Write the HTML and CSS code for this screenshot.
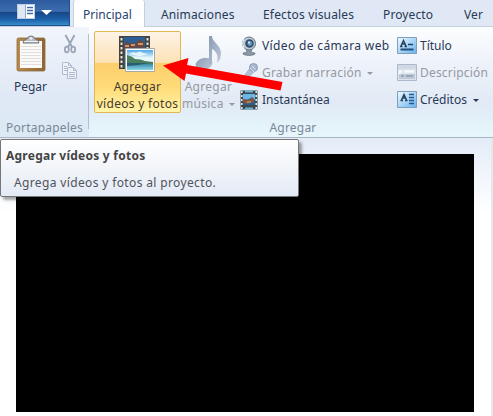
FILE: index.html
```html
<!DOCTYPE html>
<html lang="es">
<head>
<meta charset="utf-8">
<title>Agregar vídeos y fotos</title>
<link rel="stylesheet" href="styles.css">
</head>
<body>
<div class="window">
  <nav class="tabs">
    <button class="app-menu" aria-label="Menú">
      <svg width="36" height="16" viewBox="0 0 36 16">
        <rect x=".5" y=".5" width="17" height="14" fill="#fff" stroke="#b9cce4"/>
        <rect x="1" y="1" width="7" height="13" fill="#dfe7f1"/>
        <path d="M8.5 1v13" stroke="#8da8cb"/>
        <path d="M10 3.500h6M10 6.500h6M10 9.500h6" stroke="#3e68a8" stroke-width="1.300"/>
        <path d="M24 6h11l-5.500 5z" fill="#fff"/>
      </svg>
    </button>
    <a class="tab active">Principal</a>
    <a class="tab t-anim">Animaciones</a>
    <a class="tab t-fx">Efectos visuales</a>
    <a class="tab t-proj">Proyecto</a>
    <a class="tab t-view">Ver</a>
  </nav>

  <section class="ribbon">
    <div class="group clipboard">
      <div class="group-body">
        <div class="paste">
          <svg width="30" height="37" viewBox="0 0 30 37">
            <defs><linearGradient id="wood"><stop offset="0" stop-color="#b98a4c"/><stop offset="1" stop-color="#8f6432"/></linearGradient></defs>
            <rect x="1" y="3" width="28" height="33" rx="1.500" fill="url(#wood)" stroke="#8d6a42" stroke-width=".8"/>
            <path d="M4 6h22v27H4z" fill="#fbfaf7"/>
            <path d="M5 11.500h20M5 14.500h20M5 17.500h20M5 20.500h20M5 23.500h20M5 26.500h20M5 29.500h20" stroke="#dededf"/>
            <path d="M7 8q0-3 4-4 1-3 4-3t4 3q4 1 4 4z" fill="#b9bdc3" stroke="#72777e"/>
            <circle cx="15" cy="3.500" r="1.200" fill="#f3f5f8"/>
            <path d="M8 6.500h14" stroke="#eff1f3"/>
          </svg>
          <span>Pegar</span>
        </div>
        <div class="clip-tools">
          <svg width="12" height="20" viewBox="0 0 12 20" fill="none" stroke="#9aa5b6">
            <path d="M1.500 1 8 13M10.500 1 4 13" stroke-width="1.900"/>
            <ellipse cx="2.800" cy="15.500" rx="2" ry="2.800" stroke-width="1.700"/>
            <ellipse cx="9.200" cy="15.500" rx="2" ry="2.800" stroke-width="1.700"/>
          </svg>
          <svg width="17" height="19" viewBox="0 0 17 19" fill="#edf2f9" stroke="#b0bccd">
            <path d="M1.500 1.500h6l3 3v9h-9zM7.500 1.500v3h3M3 5.500h3M3 7.500h3M3 9.500h3"/>
            <path d="M6.500 6.500h6l3 3v8h-9zM12.500 6.500v3h3M8 11.500h6M8 13.500h6M8 15.500h6"/>
          </svg>
        </div>
      </div>
      <div class="caption">Portapapeles</div>
    </div>

    <div class="group add">
      <div class="group-body">
        <button class="big hot">
          <svg width="37" height="37" viewBox="0 0 37 37">
            <defs>
              <linearGradient id="sky" x2="0" y2="1"><stop stop-color="#4ba7e8"/><stop offset=".6" stop-color="#e9f8fb"/></linearGradient>
              <linearGradient id="sea" x2="0" y2="1"><stop stop-color="#2b7f9e"/><stop offset="1" stop-color="#8fd6e6"/></linearGradient>
            </defs>
            <path d="M0 0h31v33H0z" fill="#414344"/>
            <path d="M5 1h21v15H5z" fill="#2b5f95"/>
            <path d="M5 10l3-5 3 3 3-2 3 2 3-5 5 3v10H5z" fill="#634a4a"/>
            <path d="M6 10h4M12 9h4M19 8h5" stroke="#d7935a" stroke-width="2"/>
            <path d="M5 18h21v14H5z" fill="#315d78"/>
            <path d="M2.500 2v30M28.500 2v30" stroke="#f2e4c6" stroke-width="2" stroke-dasharray="2.500 2"/>
            <path d="M6.500 12.500h29v23h-29z" fill="#fff" stroke="#a5a8a8"/>
            <path d="M8 14h26v13H8z" fill="url(#sky)"/>
            <path d="M10 18q4-3 7-1 4-3 7 0l5 1-8 2z" fill="#fff" opacity=".75"/>
            <path d="M8 27h26v7H8z" fill="url(#sea)"/>
            <path d="M8 19q5 1 8 4 6 0 10 2l8 1v2H8z" fill="#4b7e5d"/>
            <path d="M8 27h22l-11 2-11 1z" fill="#275e72"/>
          </svg>
          <span>Agregar<br>vídeos y fotos</span>
        </button>
        <button class="big music">
          <svg width="27" height="37" viewBox="0 0 27 37">
            <defs><linearGradient id="note" x2="1" y2="1"><stop stop-color="#8b9bb3"/><stop offset="1" stop-color="#bdc8da"/></linearGradient></defs>
            <ellipse cx="9" cy="28" rx="8.500" ry="6" transform="rotate(-15 9 28)" fill="url(#note)"/>
            <path d="M14 0h3c0 6 9 9 9 17 0 4-1 7-4 10 2-8-1-12-5-14v15h-3z" fill="url(#note)"/>
          </svg>
          <span>Agregar<br>música <i class="drop"></i></span>
        </button>
        <div class="list capture">
          <div class="row wide">
            <svg width="18" height="20" viewBox="0 0 18 20">
              <path d="M6 13h6l-1 3 4 1q1 2-6 2.500Q2 19 3 17l4-1z" fill="#8b99a6" stroke="#596879" stroke-width=".6"/>
              <circle cx="9" cy="7.500" r="6.500" fill="#bdc9d4" stroke="#647588"/>
              <circle cx="9.500" cy="7.500" r="4.300" fill="#36506c"/>
              <circle cx="9.800" cy="7.500" r="2.400" fill="#6699c3"/>
              <circle cx="9" cy="6.500" r="1" fill="#e6f6ff"/>
              <path d="M4 3q-3 4 0 9" fill="none" stroke="#eef3f6"/>
            </svg>
            <span>Vídeo de cámara web</span>
          </div>
          <div class="row off">
            <svg width="18" height="20" viewBox="0 0 18 20">
              <path d="M10 5l4 4-10 9-2-2z" fill="#b4c0d2" stroke="#9aa9bf" stroke-width=".7"/>
              <circle cx="13.500" cy="4.500" r="4" fill="#a7b7d0" stroke="#8b9cb4"/>
              <path d="M10 5l4 4M12 3l3.500 3.500" stroke="#e0e7f1"/>
            </svg>
            <span>Grabar narración <i class="drop"></i></span>
          </div>
          <div class="row">
            <svg width="18" height="20" viewBox="0 0 18 20">
              <path d="M.5.500h17v19H.5z" fill="#3d4750"/>
              <path d="M3 4h12v11H3z" fill="#68b7e5"/>
              <path d="M3 9l3 1 3-1 3-2 3 3v5H3z" fill="#275d8e"/>
              <path d="M4 13v-3h2v3h2v-2h3v-2h2v4" fill="none" stroke="#9b5135" stroke-width="1.500"/>
              <path d="M7 12h4" stroke="#eac04d"/>
              <path d="M5 1.500h8M5 18.500h8" stroke="#6bb5d8" stroke-width="2"/>
              <path d="M1.800 1v18M16.200 1v18" stroke="#e5edef" stroke-width="1.500" stroke-dasharray="2 2"/>
            </svg>
            <span>Instantánea</span>
          </div>
        </div>
        <div class="list text">
          <div class="row">
            <svg width="20" height="17" viewBox="0 0 20 17">
              <defs><linearGradient id="card" x2="1" y2="1"><stop stop-color="#f2faff"/><stop offset="1" stop-color="#64b2ef"/></linearGradient></defs>
              <path d="M.5.500h19v16H.5z" fill="url(#card)" stroke="#7d9fbd"/>
              <path d="M4 9 6.500 3.500 9 9M5 7h3" fill="none" stroke="#23415f" stroke-width="1.400"/>
              <path d="M3 9.500h2.500M7.500 9.500H10M11 7.500h5" stroke="#23415f" stroke-width="1.500"/>
              <path d="M3.500 12.500h13" stroke="#244d78" stroke-width="2"/>
            </svg>
            <span>Título</span>
          </div>
          <div class="row off">
            <svg width="20" height="17" viewBox="0 0 20 17">
              <path d="M.5.500h19v16H.5z" fill="#dce4ef" stroke="#acb9ca"/>
              <path d="M1 1h18v4H1z" fill="#d0d9e5"/>
              <path d="M2.500 11V7.500H5M7 7.500h10" fill="none" stroke="#f9fbfd" stroke-width="2"/>
              <path d="M2 10h16v5H2z" fill="#c0cad9"/>
              <path d="M4 12h3M9 12h7" stroke="#8e9bb0" stroke-width="1.500"/>
            </svg>
            <span>Descripción</span>
          </div>
          <div class="row">
            <svg width="20" height="17" viewBox="0 0 20 17">
              <path d="M.5.500h19v16H.5z" fill="url(#card)" stroke="#7d9fbd"/>
              <path d="M4.500 9 7 3.500 9.500 9M5.500 7h3M3.500 9.500H6M8 9.500h2.500" fill="none" stroke="#23415f" stroke-width="1.400"/>
              <path d="M12 3.500h5M12 6.500h5M12 9.500h5M12 12.500h5" stroke="#28588b" stroke-width="1.300"/>
            </svg>
            <span>Créditos <i class="drop"></i></span>
          </div>
        </div>
      </div>
      <div class="caption">Agregar</div>
    </div>
  </section>

  <main class="workspace"><div class="preview"></div></main>

  <aside class="tooltip">
    <strong>Agregar vídeos y fotos</strong>
    <p>Agrega vídeos y fotos al proyecto.</p>
  </aside>
  <svg class="pointer" width="122" height="36" viewBox="0 0 122 36">
    <path d="M1 9.500 26.500 2 25 9 120.500 26 118.500 34.500 24 17.500 22.500 25z" fill="#fe0000"/>
  </svg>
</div>
</body>
</html>
```
FILE: styles.css
```css
* { box-sizing: border-box; }
body { margin: 0; font: 12px/17px "Noto Sans", "Open Sans", sans-serif; color: #293955; overflow: hidden; }
svg { display: block; flex: none; }
button { border: 0; padding: 0; background: none; font: inherit; color: inherit; }
.window { position: relative; width: 493px; height: 416px; display: flex; flex-direction: column; background: #fff; }

.tabs { height: 27px; flex: none; display: flex; background: #dfe8f4; border-bottom: 1px solid #c3d0df; white-space: nowrap; }
.app-menu { width: 70px; height: 26px; margin-right: 3px; padding: 0 0 1px 17px; border: 1px solid #234f8d; border-top: 0; border-left: 0; background: linear-gradient(#2c5c9f 0, #3b6dae 45%, #174787 50%, #1d61aa 78%, #388ccb 100%); }
.tab { padding: 6px 0 0; letter-spacing: .12px; }
.tab.active { width: 72px; height: 27px; padding-left: 9px; letter-spacing: 0; color: #283f74; background: #fff; border: 1px solid #c3d0df; border-width: 0 1px; border-radius: 3px 3px 0 0; }
.t-anim { width: 102px; margin-left: 16px; }
.t-fx { width: 120px; letter-spacing: .17px; }
.t-proj { width: 81px; }

.ribbon { height: 111px; flex: none; display: flex; background: linear-gradient(#fcfdfe 0, #edf2fa 35%, #e1eaf5 70%, #e6f7fc 100%); border-bottom: 1px solid #aab5c4; }
.group { display: flex; flex-direction: column; }
.group-body { height: 93px; display: flex; }
.caption { color: #7b8798; text-align: center; line-height: 16px; letter-spacing: .2px; }
.clipboard { position: relative; width: 89px; background: linear-gradient(#f1f5fb, #dfe8f5 65%, #dbeaf5); }
.clipboard::after { content: ""; position: absolute; right: 0; top: 7px; width: 1px; height: 95px; background: #b2bfd1; }
.paste { width: 61px; padding-top: 8px; display: flex; flex-direction: column; align-items: center; gap: 6px; }
.clip-tools { display: flex; flex-direction: column; align-items: center; gap: 7px; padding-top: 7px; width: 17px; }
.add { flex: 1; padding-left: 5px; }
.add .caption { width: 398px; }
.big { display: flex; flex-direction: column; align-items: center; white-space: nowrap; letter-spacing: .3px; }
.hot { width: 87px; height: 82px; margin-top: 4px; padding-top: 4px; gap: 5px; border: 1px solid #e0b751; border-radius: 2px; background: linear-gradient(#fdf3e6 0, #fde2b6 38%, #fcce6c 39%, #ffdc79 70%, #fff4aa 100%); color: #473b30; }
.music { width: 55px; padding-top: 9px; gap: 5px; color: #9699a0; }
.drop { display: inline-block; border: 3px solid transparent; border-top-color: currentColor; border-bottom: 0; margin-left: 2px; vertical-align: 2px; }
.list { padding-top: 5px; }
.row { height: 27px; display: flex; align-items: center; gap: 4px; white-space: nowrap; }
.row.off { color: #9699a0; letter-spacing: .19px; }
.row.wide { letter-spacing: .36px; }
.capture { width: 157px; margin-left: 4px; }
.text .row { gap: 3px; }
.text .drop { margin-left: 3px; }

.workspace { flex: 1; padding: 16px 0 0 16px; background: linear-gradient(#e4ecf8, #fff 75px); border-right: 2px solid #e4e8ee; }
.preview { width: 458px; height: 258px; background: #000; }

.tooltip { position: absolute; left: 0; top: 139px; width: 299px; height: 58px; padding: 7px 5px; border: 1px solid #767676; border-radius: 2px; background: linear-gradient(#fff, #e4eaf5); box-shadow: 3px 3px 3px rgba(0, 0, 0, .35); color: #50535a; white-space: nowrap; }
.tooltip strong { display: block; color: #444; letter-spacing: .24px; }
.tooltip p { margin: 10px 0 0 8px; letter-spacing: .36px; }
.pointer { position: absolute; left: 162px; top: 56px; }
```
